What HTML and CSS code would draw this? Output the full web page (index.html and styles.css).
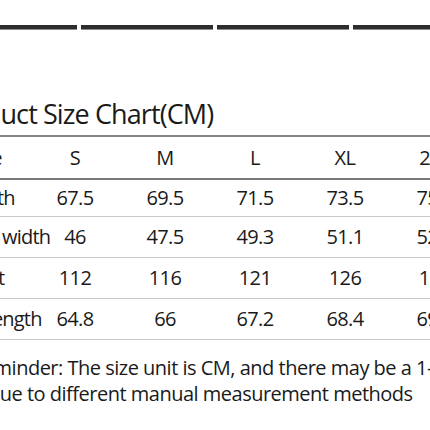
FILE: index.html
```html
<!DOCTYPE html>
<html lang="en">
<head>
<meta charset="UTF-8">
<title>Size Chart</title>
<link rel="stylesheet" href="styles.css">
</head>
<body>
<div class="sheet">
    <div class="bars">
        <span class="bar"></span>
        <span class="bar"></span>
        <span class="bar"></span>
        <span class="bar"></span>
    </div>
    <h1 class="title">Product Size Chart(CM)</h1>
    <table class="chart">
        <tr class="head">
            <th><span class="label">Size</span></th><th>S</th><th>M</th><th>L</th><th>XL</th><th>2XL</th>
        </tr>
        <tr class="r1">
            <td><span class="label">Length</span></td><td>67.5</td><td>69.5</td><td>71.5</td><td>73.5</td><td>75.5</td>
        </tr>
        <tr>
            <td><span class="label">Shoulder width</span></td><td>46</td><td>47.5</td><td>49.3</td><td>51.1</td><td>52.9</td>
        </tr>
        <tr>
            <td><span class="label">Bust</span></td><td>112</td><td>116</td><td>121</td><td>126</td><td>131</td>
        </tr>
        <tr>
            <td><span class="label">Sleeve length</span></td><td>64.8</td><td>66</td><td>67.2</td><td>68.4</td><td>69.6</td>
        </tr>
    </table>
    <p class="note">Reminder: The size unit is CM, and there may be a 1-3cm error<br>due to different manual measurement methods</p>
</div>
</body>
</html>
```

FILE: styles.css
```css
*{
    margin:0;
    padding:0;
    box-sizing:border-box;
}
html,body{
    width:430px;
    height:430px;
    overflow:hidden;
    background:#fff;
}
body{
    font-family:"Open Sans","Noto Sans",sans-serif;
    color:#1a1a1a;
}
.sheet{
    width:560px;
    margin-left:-60px;
}
.bars{
    display:flex;
    gap:4px;
    margin-top:25px;
    padding-left:5px;
}
.bar{
    width:132px;
    height:5px;
    background:#2e2e2e;
    border-bottom:1px solid #8c8c8c;
}
.title{
    font-weight:400;
    font-size:27px;
    line-height:34px;
    letter-spacing:-0.9px;
    margin-top:67px;
    padding-left:4px;
    padding-bottom:4px;
    border-bottom:2px solid #858585;
}
.chart{
    border-collapse:collapse;
    table-layout:fixed;
    width:540px;
}
.chart th,
.chart td{
    width:90px;
    height:41px;
    padding:0;
    text-align:center;
    font-weight:400;
    font-size:20px;
    letter-spacing:-0.6px;
    white-space:nowrap;
    border-bottom:1px solid #c9c9c9;
}
.chart .head th{
    height:42px;
    border-bottom:2px solid #7a7a7a;
}
.chart .r1 td{
    height:37px;
}
.label{
    display:inline-block;
    width:160px;
    margin:0 -35px;
    text-align:center;
    letter-spacing:-0.8px;
}
.note{
    font-size:20px;
    line-height:26px;
    letter-spacing:-0.5px;
    white-space:nowrap;
    margin-top:15px;
    padding-left:48px;
    text-indent:-17px;
}
```
